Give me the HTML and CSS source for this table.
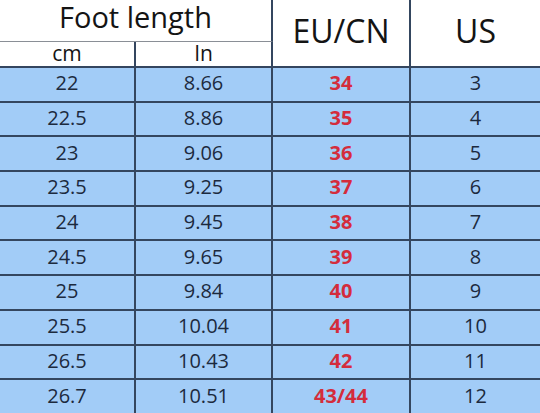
FILE: index.html
```html
<!DOCTYPE html>
<html>
<head>
<meta charset="utf-8">
<link rel="stylesheet" href="styles.css">
</head>
<body>
<div class="chart">
  <div class="cell head foot"><span>Foot length</span></div>
  <div class="cell head big eu">EU/CN</div>
  <div class="cell head big us">US</div>
  <div class="cell head sub">cm</div>
  <div class="cell head sub in">In</div>

  <div class="cell d">22</div><div class="cell d">8.66</div><div class="cell d red">34</div><div class="cell d last">3</div>
  <div class="cell d">22.5</div><div class="cell d">8.86</div><div class="cell d red">35</div><div class="cell d last">4</div>
  <div class="cell d">23</div><div class="cell d">9.06</div><div class="cell d red">36</div><div class="cell d last">5</div>
  <div class="cell d">23.5</div><div class="cell d">9.25</div><div class="cell d red">37</div><div class="cell d last">6</div>
  <div class="cell d">24</div><div class="cell d">9.45</div><div class="cell d red">38</div><div class="cell d last">7</div>
  <div class="cell d">24.5</div><div class="cell d">9.65</div><div class="cell d red">39</div><div class="cell d last">8</div>
  <div class="cell d">25</div><div class="cell d">9.84</div><div class="cell d red">40</div><div class="cell d last">9</div>
  <div class="cell d">25.5</div><div class="cell d">10.04</div><div class="cell d red">41</div><div class="cell d last">10</div>
  <div class="cell d">26.5</div><div class="cell d">10.43</div><div class="cell d red">42</div><div class="cell d last">11</div>
  <div class="cell d">26.7</div><div class="cell d">10.51</div><div class="cell d red">43/44</div><div class="cell d last">12</div>
</div>
</body>
</html>
```

FILE: styles.css
```css
html, body {
  margin: 0;
  padding: 0;
  background: #ffffff;
}
.chart {
  width: 540px;
  display: grid;
  grid-template-columns: 136px 137px 138px 129px;
  grid-template-rows: 42px 26px repeat(10, 34.7px);
  font-family: "Open Sans", "Noto Sans", sans-serif;
  color: #1c2a3e;
}
.cell {
  box-sizing: border-box;
  display: flex;
  align-items: center;
  justify-content: center;
  line-height: 1.1;
  border-right: 2px solid #34465f;
  border-bottom: 2px solid #34465f;
}
.head {
  background: #ffffff;
  color: #141414;
}
.foot {
  grid-column: 1 / 3;
  grid-row: 1;
  font-size: 29px;
  border-bottom: 1px solid #8a8f96;
  padding-bottom: 8px;
}
.foot span {
  white-space: nowrap;
}
.big {
  grid-row: 1 / 3;
  font-size: 32px;
  padding-bottom: 5px;
}
.us {
  border-right: none;
}
.sub {
  font-size: 21px;
  padding-bottom: 0;
}
.d {
  background: #a2ccf7;
  font-size: 20px;
  padding-bottom: 2px;
}
.last {
  border-right: none;
}
.red {
  color: #d42c3c;
  font-weight: 700;
}
```
